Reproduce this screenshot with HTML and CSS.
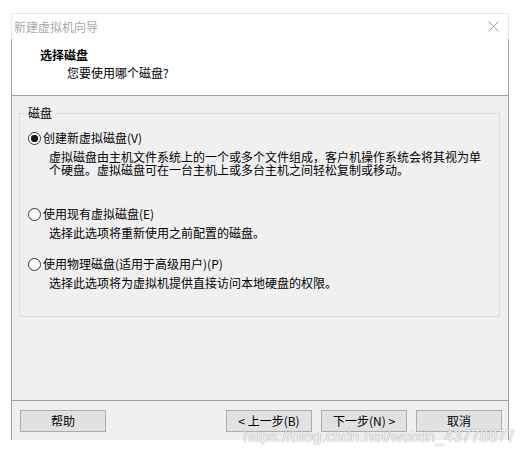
FILE: index.html
```html
<!DOCTYPE html>
<html lang="zh-CN">
<head>
<meta charset="utf-8">
<title>新建虚拟机向导</title>
<link rel="stylesheet" href="styles.css">
</head>
<body>
<div class="window">
  <div class="titlebar">
    <span class="title">新建虚拟机向导</span>
    <svg class="close" width="11" height="11" viewBox="0 0 11 11" aria-hidden="true">
      <path d="M0.5 0.5 L10.5 10.5 M10.5 0.5 L0.5 10.5" stroke="#9a9a9a" stroke-width="1" fill="none"/>
    </svg>
  </div>
  <div class="client">
    <div class="header">
      <div class="h-title">选择磁盘</div>
      <div class="h-sub">您要使用哪个磁盘?</div>
    </div>
    <div class="content">
      <fieldset class="group">
        <legend>磁盘</legend>
        <div class="option">
          <div class="radio-row"><span class="radio checked"></span><span>创建新虚拟磁盘(V)</span></div>
          <div class="desc desc-tall">虚拟磁盘由主机文件系统上的一个或多个文件组成，客户机操作系统会将其视为单个硬盘。虚拟磁盘可在一台主机上或多台主机之间轻松复制或移动。</div>
        </div>
        <div class="option">
          <div class="radio-row"><span class="radio"></span><span>使用现有虚拟磁盘(E)</span></div>
          <div class="desc">选择此选项将重新使用之前配置的磁盘。</div>
        </div>
        <div class="option">
          <div class="radio-row"><span class="radio"></span><span>使用物理磁盘(适用于高级用户)(P)</span></div>
          <div class="desc">选择此选项将为虚拟机提供直接访问本地硬盘的权限。</div>
        </div>
      </fieldset>
    </div>
    <div class="footer">
      <button class="btn">帮助</button>
      <div class="nav">
        <button class="btn">&lt; 上一步(B)</button>
        <button class="btn">下一步(N) &gt;</button>
        <button class="btn">取消</button>
      </div>
    </div>
  </div>
</div>
<div class="watermark">https://blog.csdn.net/weixin_43778877</div>
</body>
</html>
```

FILE: styles.css
```css
html, body {
  margin: 0;
  padding: 0;
  background: #ffffff;
}

body {
  font-family: "Noto Sans CJK SC", "Noto Sans", sans-serif;
  font-size: 12px;
  color: #000000;
  position: relative;
  height: 455px;
  overflow: hidden;
}

.window {
  margin: 13px 0 0 11px;
  width: 498px;
}

.titlebar {
  box-sizing: border-box;
  height: 26px;
  background: #ffffff;
  border: 1px solid #e8e8e8;
  border-bottom: none;
  display: flex;
  align-items: center;
  justify-content: space-between;
  padding: 0 9px 0 2px;
}

.title {
  color: #a8a8a8;
  line-height: 14px;
}

.close {
  display: block;
}

.client {
  border-left: 1px solid #a0a0a0;
  border-right: 1px solid #a0a0a0;
}

.header {
  box-sizing: border-box;
  height: 57px;
  background: #ffffff;
  border-bottom: 1px solid #a0a0a0;
  padding: 9px 0 0 28px;
}

.h-title {
  font-weight: bold;
  line-height: 14px;
}

.h-sub {
  line-height: 14px;
  margin: 4px 0 0 27px;
}

.content {
  box-sizing: border-box;
  height: 304px;
  background: #f0f0f0;
  padding: 10px 8px 0 7px;
}

.group {
  margin: 0;
  padding: 11px 8px 27px 8px;
  border: 1px solid #dcdcdc;
  min-width: 0;
}

.group legend {
  padding: 0 2px;
  margin-left: -2px;
  line-height: 14px;
}

.option {
  margin-bottom: 18px;
}

.option:last-child {
  margin-bottom: 0;
}

.radio-row {
  display: flex;
  align-items: center;
  height: 14px;
  line-height: 14px;
}

.radio {
  box-sizing: border-box;
  width: 13px;
  height: 13px;
  border: 1px solid #333333;
  border-radius: 50%;
  background: #ffffff;
  margin-right: 2px;
  flex: none;
}

.radio.checked {
  background: radial-gradient(circle, #1a1a1a 0 3.4px, #ffffff 4px);
}

.desc {
  margin: 5px 0 0 21px;
  line-height: 13px;
}

.desc-tall {
  min-height: 39px;
}

.footer {
  box-sizing: border-box;
  height: 40px;
  background: #f0f0f0;
  border-top: 1px solid #a0a0a0;
  padding: 9px 6px 0 8px;
  display: flex;
  justify-content: space-between;
  align-items: flex-start;
}

.nav {
  display: flex;
  gap: 9px;
}

.btn {
  box-sizing: border-box;
  width: 86px;
  height: 22px;
  padding: 0;
  background: #e1e1e1;
  border: 1px solid #adadad;
  border-radius: 0;
  font-family: "Noto Sans CJK SC", "Noto Sans", sans-serif;
  font-size: 12px;
  line-height: 18px;
  color: #000000;
}

.watermark {
  position: absolute;
  left: 243px;
  top: 427px;
  font-family: "Liberation Sans", Arial, sans-serif;
  font-size: 16px;
  line-height: 20px;
  color: rgba(255, 255, 255, 0.92);
  text-shadow: 0 0 1px rgba(0, 0, 0, 0.35), 0 0 1px rgba(0, 0, 0, 0.2);
  white-space: nowrap;
  pointer-events: none;
}
```
